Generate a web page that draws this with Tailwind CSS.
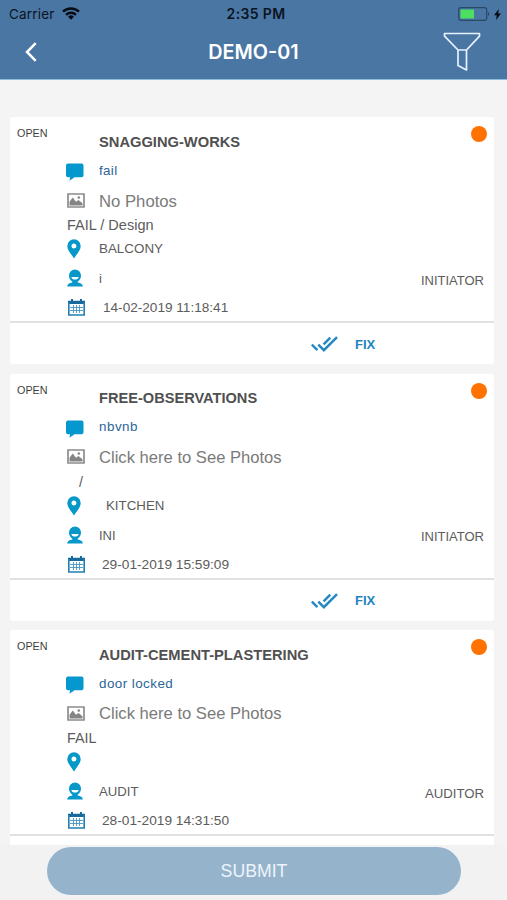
<!DOCTYPE html>
<html lang="en">
<head>
<meta charset="utf-8">
<title>DEMO-01</title>
<script src="https://cdn.jsdelivr.net/npm/@tailwindcss/browser@4"></script>
</head>
<body class="bg-[#f4f4f4] font-['Liberation_Sans',sans-serif] text-[#5c5c5c]">
<svg class="hidden">
  <symbol id="comment" viewBox="0 0 18 18"><path fill="#0598ce" d="M2 .5h13.500a2 2 0 0 1 2 2v9.700a2 2 0 0 1-2 2H8.500L3.500 17.800l.6-3.600H2a2 2 0 0 1-2-2V2.500a2 2 0 0 1 2-2z"/></symbol>
  <symbol id="photo" viewBox="0 0 18 15"><path fill="none" stroke="#8c8c8c" stroke-width="1.700" d="M1 1h16v13H1z"/><path fill="#858585" d="M2.500 12.500V8.800l3.200-4.300 3.300 4.200L11.500 7l4 3.200v2.300z"/><circle cx="11.800" cy="4.600" r="1.300" fill="#8c8c8c"/></symbol>
  <symbol id="pin" viewBox="0 0 14 20"><path fill="#0598c8" fill-rule="evenodd" d="M7 .3a6.700 6.700 0 0 1 6.700 6.700C13.700 11 10.500 14 7 19.500 3.500 14 .3 11 .3 7A6.700 6.700 0 0 1 7 .3zm0 4.200a2.500 2.500 0 1 0 0 5 2.500 2.500 0 0 0 0-5z"/></symbol>
  <symbol id="user" viewBox="0 0 16 18"><path fill="#0598c8" d="M8 .5a6 6 0 0 1 6 6c0 2.700-1.300 4.800-3.300 6v.9c2.900.6 5 1.600 5.200 4.200H.1c.2-2.600 2.300-3.600 5.200-4.200v-.9C3.300 11.300 2 9.200 2 6.500a6 6 0 0 1 6-6z"/><path fill="#fff" d="M4.300 8h7.400c-.5 1.900-1.900 2.600-3.700 2.600S4.800 9.900 4.300 8z"/></symbol>
  <symbol id="calendar" viewBox="0 0 17 17"><path fill="#19699c" d="M0 1.800h17V5H0zM3 0h2v3H3zM12 0h2v3h-2z"/><path fill="none" stroke="#2080b3" stroke-width="1.600" d="M.8 3v13h15.400V3"/><path fill="none" stroke="#4595c2" stroke-width=".9" d="M5.500 6v8M8.500 6v8M11.500 6v8M2 8.500h13M2 11.500h13"/></symbol>
  <symbol id="checks" viewBox="0 0 27 16"><path fill="none" stroke="#2489c0" stroke-width="2.500" d="M.8 8.600l5.600 5.600M7.300 8.600l5.600 5.600L26 1.100M12.600 8.300L19.300 1.600"/></symbol>
</svg>
<div class="flex h-[900px] w-[507px] flex-col overflow-hidden">
  <header class="h-20 shrink-0 border-b border-[#8fbbdd] bg-[#4a76a4] font-[Inter,sans-serif]">
    <div class="grid h-7 grid-cols-3 items-center pr-1.5 pl-[9px] text-[#0a1422]">
      <div class="flex items-center gap-[7px] text-[13.500px] tracking-[0.200px]">
        <span>Carrier</span>
        <svg class="mb-0.5 h-[13px] w-[18px]" viewBox="0 0 18 13"><path fill="none" stroke="#050b14" stroke-width="2.400" d="M1 4.700a11.500 11.500 0 0 1 16 0M4 7.800a7.300 7.300 0 0 1 10 0"/><path fill="#050b14" d="M9 12.700L6.100 9.700a4.200 4.200 0 0 1 5.800 0z"/></svg>
      </div>
      <div class="mb-0.5 pl-0.5 text-center text-[14px] font-semibold tracking-[0.350px] whitespace-nowrap">2:35 PM</div>
      <div class="flex items-center justify-end gap-1">
        <svg class="h-[14px] w-8" viewBox="0 0 32 14"><rect x=".7" y=".7" width="28" height="12.600" rx="2.200" fill="none" stroke="#2b4866" stroke-width="1.200"/><rect x="2.500" y="2.500" width="13.500" height="9" fill="#4cdf61"/><path fill="#2b4866" d="M30 5c1.500.3 1.500 3.700 0 4z"/></svg>
        <svg class="h-[11px] w-[7px]" viewBox="0 0 7 11"><path fill="#060c14" d="M4.800 0L0 6.200h2.700L2 11l5-6.500H4.200z"/></svg>
      </div>
    </div>
    <div class="flex h-[50px] items-center justify-between pr-[26px] pl-[25px] text-white">
      <svg class="mb-0.5 h-5 w-[37px]" viewBox="0 0 37 20"><path fill="none" stroke="#fff" stroke-width="2.500" d="M10.700 1.200L2 10l8.700 8.800"/></svg>
      <h1 class="pl-0.5 text-[19.800px] font-semibold">DEMO-01</h1>
      <svg class="mb-1 h-[39px] w-[38px]" viewBox="0 0 38 39"><path fill="none" stroke="#e6f2ff" stroke-width="1.700" stroke-linejoin="round" d="M1.500 1.500h35v2.700L23.500 18v20l-8.500-4.500V18L1.500 4.200zM15 18h8.500"/></svg>
    </div>
  </header>

  <main class="flex min-h-0 flex-1 flex-col gap-[9.500px] overflow-hidden px-[10px] pt-[37px]">
    <article class="relative h-[247px] w-[484px] shrink-0 rounded-[3px] bg-white pt-[11px]">
      <span class="absolute top-[9px] left-[7px] text-[10.800px] leading-[14px] text-[#3f3f3f]">OPEN</span>
      <span class="absolute top-[9px] right-[7px] size-4 rounded-full bg-[#ff7200]"></span>
      <div class="flex h-[28px] items-center pl-[89px] text-[14.700px] font-bold text-[#505050]">SNAGGING-WORKS</div>
      <div class="flex h-[29px] items-center pl-14"><svg class="mt-[3px] mr-[15px] size-[18px]"><use href="#comment"/></svg><span class="mt-px text-[13.400px] tracking-[0.350px] text-[#2b6599]">fail</span></div>
      <div class="flex h-[31px] items-center pl-14"><svg class="mr-[14px] ml-[1px] h-[15px] w-[18px]"><use href="#photo"/></svg><span class="mt-0.5 text-[16.700px] text-[#7a7a7a]">No Photos</span></div>
      <div class="flex h-[20px] items-center pl-[57px] text-[14.500px]">FAIL / Design</div>
      <div class="flex h-[26px] items-center pl-[57px]"><svg class="mr-[18px] h-5 w-[14px]"><use href="#pin"/></svg><span class="text-[13.400px]">BALCONY</span></div>
      <div class="flex h-[34px] items-center pr-[10px] pl-[57px]"><svg class="mr-4 mb-0.5 h-[18px] w-4"><use href="#user"/></svg><span class="text-[13px]">i</span><span class="mt-[3px] ml-auto text-[13px]">INITIATOR</span></div>
      <div class="flex h-[27px] items-center border-b-2 border-[#e1e1e1] pl-[58px]"><svg class="mr-[18px] mb-0.5 size-[17px]"><use href="#calendar"/></svg><span class="text-[13.600px]">14-02-2019 11:18:41</span></div>
      <div class="flex h-[41px] items-center pt-px pl-[301px] text-[13px] font-bold text-[#2484bd]"><svg class="mr-[17px] h-4 w-[27px]"><use href="#checks"/></svg><span class="mt-px">FIX</span></div>
    </article>

    <article class="relative h-[247px] w-[484px] shrink-0 rounded-[3px] bg-white pt-[11px]">
      <span class="absolute top-[9px] left-[7px] text-[10.800px] leading-[14px] text-[#3f3f3f]">OPEN</span>
      <span class="absolute top-[9px] right-[7px] size-4 rounded-full bg-[#ff7200]"></span>
      <div class="flex h-[28px] items-center pl-[89px] text-[14.600px] font-bold text-[#505050]">FREE-OBSERVATIONS</div>
      <div class="flex h-[29px] items-center pl-14"><svg class="mt-[3px] mr-[15px] size-[18px]"><use href="#comment"/></svg><span class="text-[13.400px] tracking-[0.500px] text-[#2b6599]">nbvnb</span></div>
      <div class="flex h-[31px] items-center pl-14"><svg class="mr-[14px] mb-px ml-[1px] h-[15px] w-[18px]"><use href="#photo"/></svg><span class="mt-0.5 text-[16.600px] text-[#7a7a7a]">Click here to See Photos</span></div>
      <div class="flex h-[20px] items-center pl-[69px] text-[14.300px]">/</div>
      <div class="flex h-[26px] items-center pl-[57px]"><svg class="mr-[25px] h-5 w-[14px]"><use href="#pin"/></svg><span class="text-[13.300px]">KITCHEN</span></div>
      <div class="flex h-[34px] items-center pr-[10px] pl-[57px]"><svg class="mr-4 mb-0.5 h-[18px] w-4"><use href="#user"/></svg><span class="text-[13px]">INI</span><span class="mt-[3px] ml-auto text-[13px]">INITIATOR</span></div>
      <div class="flex h-[27px] items-center border-b-2 border-[#e1e1e1] pl-[58px]"><svg class="mr-[17px] mb-0.5 size-[17px]"><use href="#calendar"/></svg><span class="text-[13.700px]">29-01-2019 15:59:09</span></div>
      <div class="flex h-[41px] items-center pt-px pl-[301px] text-[13px] font-bold text-[#2484bd]"><svg class="mr-[17px] h-4 w-[27px]"><use href="#checks"/></svg><span class="mt-px">FIX</span></div>
    </article>

    <article class="relative h-[247px] w-[484px] shrink-0 rounded-[3px] bg-white pt-[11px]">
      <span class="absolute top-[9px] left-[7px] text-[10.800px] leading-[14px] text-[#3f3f3f]">OPEN</span>
      <span class="absolute top-[9px] right-[7px] size-4 rounded-full bg-[#ff7200]"></span>
      <div class="flex h-[28px] items-center pl-[89px] text-[14.700px] font-bold text-[#505050]">AUDIT-CEMENT-PLASTERING</div>
      <div class="flex h-[29px] items-center pl-14"><svg class="mt-[3px] mr-[15px] size-[18px]"><use href="#comment"/></svg><span class="mt-0.5 text-[13.400px] tracking-[0.450px] text-[#2b6599]">door locked</span></div>
      <div class="flex h-[31px] items-center pl-14"><svg class="mr-[14px] ml-[1px] h-[15px] w-[18px]"><use href="#photo"/></svg><span class="mt-0.5 text-[16.600px] text-[#7a7a7a]">Click here to See Photos</span></div>
      <div class="flex h-[20px] items-center pl-[57px] text-[14.300px]">FAIL</div>
      <div class="flex h-[26px] items-center pl-[57px]"><svg class="h-5 w-[14px]"><use href="#pin"/></svg></div>
      <div class="flex h-[34px] items-center pr-[10px] pl-[57px]"><svg class="mr-4 mb-0.5 h-[18px] w-4"><use href="#user"/></svg><span class="text-[13.200px]">AUDIT</span><span class="mt-[3px] ml-auto text-[13.200px]">AUDITOR</span></div>
      <div class="flex h-[27px] items-center border-b-2 border-[#e1e1e1] pl-[58px]"><svg class="mr-[17px] mb-0.5 size-[17px]"><use href="#calendar"/></svg><span class="text-[13.700px]">28-01-2019 14:31:50</span></div>
    </article>
  </main>

  <footer class="h-[55px] shrink-0 bg-[#f2f2f2] pt-0.5 pl-[47px]">
    <button class="block h-[48px] w-[414px] rounded-full bg-[#96b3cc] text-[17.700px] text-[#edf4fb]">SUBMIT</button>
  </footer>
</div>
</body>
</html>
